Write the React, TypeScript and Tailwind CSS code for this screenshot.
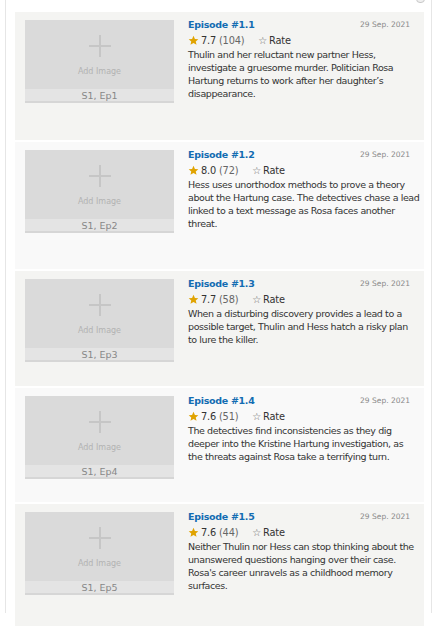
const episodes = [
  {
    num: '1.1',
    ep: 'S1, Ep1',
    rating: '7.7',
    votes: '104',
    lines: [
      'Thulin and her reluctant new partner Hess,',
      'investigate a gruesome murder. Politician Rosa',
      'Hartung returns to work after her daughter\u2019s',
      'disappearance.',
    ],
  },
  {
    num: '1.2',
    ep: 'S1, Ep2',
    rating: '8.0',
    votes: '72',
    lines: [
      'Hess uses unorthodox methods to prove a theory',
      'about the Hartung case. The detectives chase a lead',
      'linked to a text message as Rosa faces another',
      'threat.',
    ],
  },
  {
    num: '1.3',
    ep: 'S1, Ep3',
    rating: '7.7',
    votes: '58',
    lines: [
      'When a disturbing discovery provides a lead to a',
      'possible target, Thulin and Hess hatch a risky plan',
      'to lure the killer.',
    ],
  },
  {
    num: '1.4',
    ep: 'S1, Ep4',
    rating: '7.6',
    votes: '51',
    lines: [
      'The detectives find inconsistencies as they dig',
      'deeper into the Kristine Hartung investigation, as',
      'the threats against Rosa take a terrifying turn.',
    ],
  },
  {
    num: '1.5',
    ep: 'S1, Ep5',
    rating: '7.6',
    votes: '44',
    lines: [
      'Neither Thulin nor Hess can stop thinking about the',
      'unanswered questions hanging over their case.',
      "Rosa's career unravels as a childhood memory",
      'surfaces.',
    ],
  },
];

export default function App() {
  return (
    <div className="h-[626px] w-[437px] overflow-hidden bg-white font-['DejaVu_Sans',sans-serif]">
      <div className="mx-[5px] h-full border-x border-[#e6e6e6]">
        {/* Season header, scrolled mostly out of view */}
        <div className="relative mt-[-13px] flex h-[14px] items-end pl-[10px]">
          <h3 className="text-[15px] font-bold leading-none text-[#a58500]">Season 1</h3>
          <span className="absolute right-[6px] top-[6px] h-[10px] w-[9px] rounded-sm border border-[#c8c8c8] bg-[#f0f0f0]" />
        </div>

        <div className="mt-[11px] flex flex-col gap-[2px] pl-[9px] pr-[7px]">
          {episodes.map((e, i) => (
            <div
              key={e.num}
              className={`flex items-start gap-[14px] pl-[10px] pr-[5px] pt-[6px] ${
                i % 2 === 0 ? 'bg-[#f4f4f2]' : 'bg-[#f9f9f9]'
              }`}
            >
              {/* image placeholder */}
              <div className="mt-[2px] flex h-[83px] w-[149px] shrink-0 flex-col bg-[#dadada]">
                <div className="flex flex-1 flex-col items-center justify-center pt-[4px]">
                  <svg width="22" height="22" viewBox="0 0 22 22">
                    <path d="M11 0v22M0 11h22" stroke="#c6c6c6" strokeWidth="2" />
                  </svg>
                  <span className="mt-[9px] text-[8px] text-[#b2b2b2]">Add Image</span>
                </div>
                <div className="h-[14px] border-b-[2px] border-[#d6d6d6] bg-[#e4e4e4] text-center text-[9.5px] leading-[13px] text-[#888]">
                  {e.ep}
                </div>
              </div>

              {/* text column */}
              <div className="min-w-0 flex-1 pb-[39.5px]">
                <div className="flex items-start justify-between">
                  <a className="text-[9.5px] font-bold leading-[14px] tracking-[-0.3px] text-[#136cb2]">
                    Episode #{e.num}
                  </a>
                  <span className="pr-[9px] pt-[2px] text-[7.5px] leading-[10px] text-[#888]">29 Sep. 2021</span>
                </div>
                <div className="mt-[2px] flex items-center text-[9.8px] leading-[13px] tracking-[-0.2px] text-[#333]">
                  <svg width="11" height="11" viewBox="0 0 24 24" className="mr-[2px]">
                    <path
                      d="M12 1.5l3.1 7 7.4.6-5.6 4.9 1.7 7.4L12 17.5l-6.6 3.9 1.7-7.4L1.5 9.1l7.4-.6z"
                      fill="#e0a300"
                    />
                  </svg>
                  <span>{e.rating}</span>
                  <span className="ml-[3px] text-[#666]">({e.votes})</span>
                  <span className="ml-[14px] flex items-center">
                    <span className="mr-[2px] text-[10px] text-[#666]">☆</span>
                    Rate
                  </span>
                </div>
                <p className="mt-[1px] text-[9.5px] leading-[13px] tracking-[-0.4px] text-[#333]">
                  {e.lines.map((l) => (
                    <span key={l} className="block whitespace-nowrap">
                      {l}
                    </span>
                  ))}
                </p>
              </div>
            </div>
          ))}
        </div>
      </div>
    </div>
  );
}
